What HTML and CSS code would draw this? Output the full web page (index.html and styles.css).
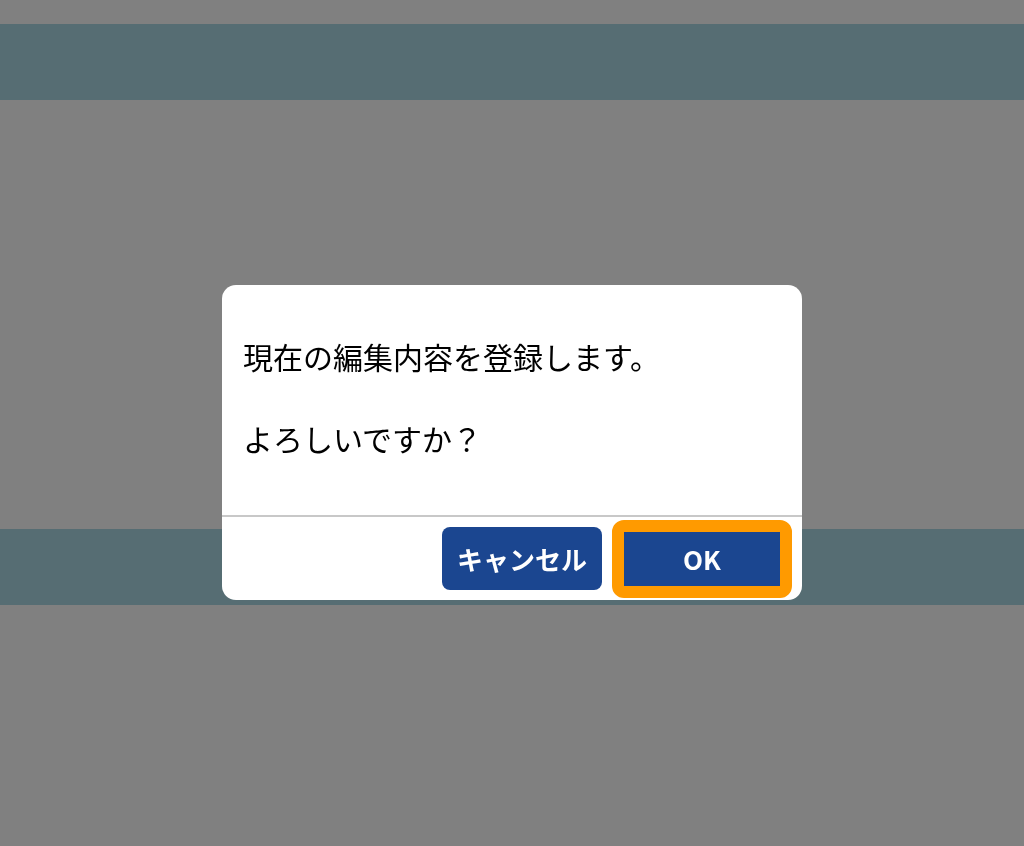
FILE: index.html
```html
<!DOCTYPE html>
<html lang="ja">

<head>
    <meta charset="UTF-8">
    <meta name="viewport" content="width=device-width, initial-scale=1.0">
    <title>編集内容の登録</title>
    <link rel="stylesheet" href="styles.css">
</head>

<body>
    <div class="screen">
        <div class="top-bar"></div>
        <div class="content"></div>
        <div class="bottom-bar"></div>
    </div>

    <!-- Confirm dialog -->
    <div class="overlay">
        <div class="dialog">
            <div class="dialog-message">
                <p>現在の編集内容を登録します。</p>
                <p>よろしいですか？</p>
            </div>
            <div class="dialog-buttons">
                <button class="btn">キャンセル</button>
                <button class="btn btn-focus">OK</button>
            </div>
        </div>
    </div>
</body>

</html>
```

FILE: styles.css
```css
body {
    margin: 0;
    background-color: #808080;
    font-family: "Noto Sans CJK JP", "Noto Sans", sans-serif;
}

.screen {
    padding-top: 24px;
}

.top-bar,
.bottom-bar {
    height: 76px;
    background-color: #566d73;
}

.content {
    height: 429px;
}

/* Dialog overlay */
.overlay {
    position: fixed;
    top: 0;
    left: 0;
    width: 100%;
    height: 100%;
    display: flex;
    justify-content: center;
    align-items: flex-start;
    padding-top: 285px;
    box-sizing: border-box;
}

.dialog {
    width: 580px;
    background: white;
    border-radius: 14px;
    overflow: hidden;
}

.dialog-message {
    padding: 51px 21px 56px;
    border-bottom: 2px solid #c8c8c8;
    color: #000;
    font-size: 30px;
    line-height: 41px;
}

.dialog-message p {
    margin: 0;
}

.dialog-message p + p {
    margin-top: 41px;
}

.dialog-buttons {
    height: 83px;
    display: flex;
    justify-content: flex-end;
    align-items: center;
    gap: 10px;
    padding-right: 10px;
}

.btn {
    width: 160px;
    height: 63px;
    box-sizing: border-box;
    background: #1b4690;
    color: white;
    border: none;
    border-radius: 8px;
    font-family: "Noto Sans CJK JP", "Noto Sans", sans-serif;
    font-size: 26px;
    font-weight: bold;
    padding: 0;
    cursor: pointer;
}

.btn-focus {
    width: 180px;
    height: 78px;
    border: 12px solid #ff9a00;
    border-radius: 12px;
}
```
